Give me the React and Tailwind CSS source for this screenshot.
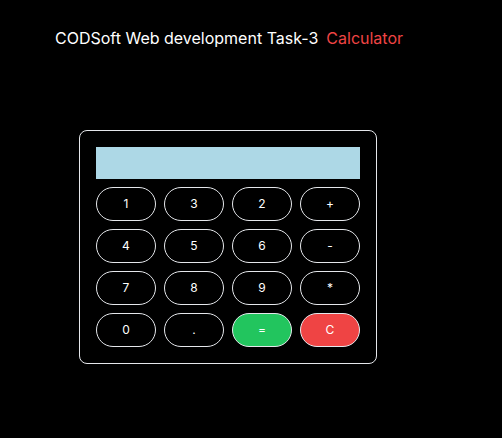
import React from 'react';

const KEYS = [
  ['1', '3', '2', '+'],
  ['4', '5', '6', '-'],
  ['7', '8', '9', '*'],
  ['0', '.', '=', 'C'],
];

function Key({ label }) {
  const color =
    label === '=' ? 'bg-[#22c55e]' :
    label === 'C' ? 'bg-[#ef4444]' :
                    'bg-black';
  return (
    <button className={`w-[60px] h-[34px] rounded-full border border-gray-200 ${color} text-white text-xs`}>
      {label}
    </button>
  );
}

export default function App() {
  return (
    <div className="min-h-screen w-full bg-black font-['Inter',sans-serif] text-white">
      <h1 className="pt-[26px] pl-[55px] text-base flex gap-2">
        <span>CODSoft Web development Task-3</span>
        <span className="text-[#ef4444]">Calculator</span>
      </h1>

      <div className="ml-[79px] mt-[80px] w-[298px] border border-gray-200 rounded-lg p-4 flex flex-col gap-2">
        <div className="h-8 bg-[#add8e6]" />
        {KEYS.map((row, i) => (
          <div key={i} className="flex gap-2">
            {row.map(k => <Key key={k} label={k} />)}
          </div>
        ))}
      </div>
    </div>
  );
}
